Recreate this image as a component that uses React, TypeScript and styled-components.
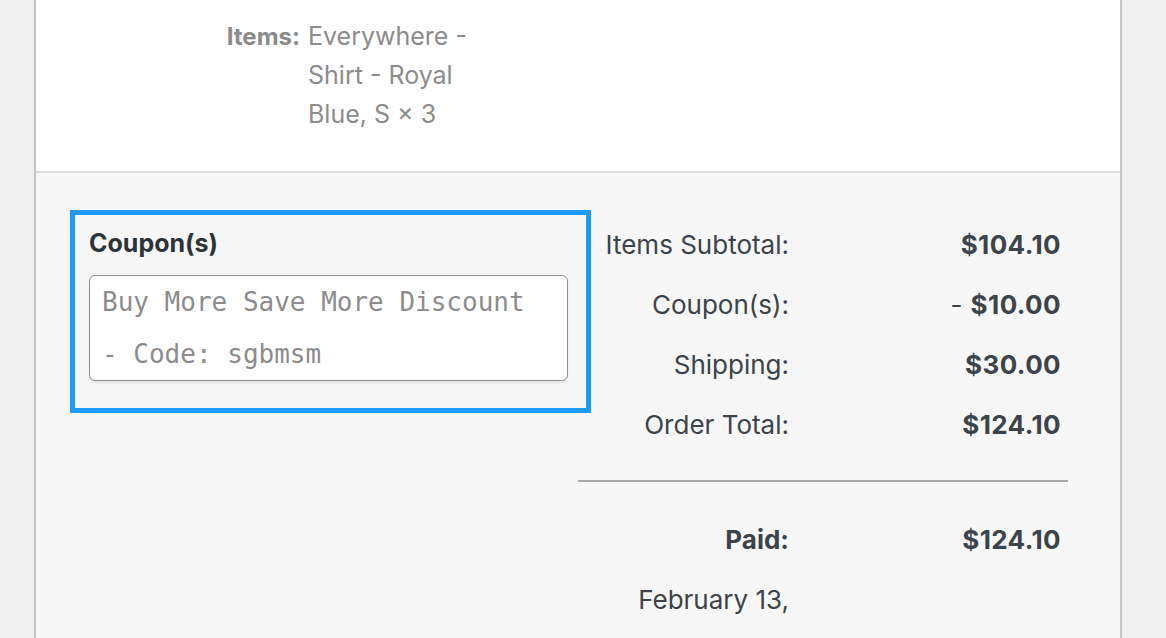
import React from "react";
import styled, { createGlobalStyle } from "styled-components";

const Global = createGlobalStyle`
  html, body { margin: 0; padding: 0; background: #f0f0f1; overflow: hidden; }
  body { font-family: Inter, Roboto, "Liberation Sans", Arial, sans-serif; }
`;

const Page = styled.div`
  width: 1166px;
  height: 638px;
  display: flex;
  padding-left: 34px;
  box-sizing: border-box;
`;

const Panel = styled.div`
  width: 1088px;
  height: 638px;
  border-left: 2px solid #c3c4c7;
  border-right: 2px solid #c3c4c7;
  box-sizing: border-box;
  display: flex;
  flex-direction: column;
`;

const TopSection = styled.div`
  background: #ffffff;
  height: 173px;
  flex-shrink: 0;
  border-bottom: 2px solid #dcdcde;
  box-sizing: border-box;
  padding-top: 17px;
  padding-left: 178px;
  display: flex;
  gap: 8px;
`;

const ItemsLabel = styled.div`
  width: 86px;
  text-align: right;
  font-weight: 700;
  font-size: 24px;
  line-height: 39px;
  color: #8a8a8a;
`;

const ItemsValue = styled.div`
  width: 175px;
  font-size: 25px;
  line-height: 39px;
  color: #8c8c8c;
`;

const BottomSection = styled.div`
  flex: 1;
  background: #f7f7f7;
  display: flex;
  padding-top: 37px;
  padding-left: 34px;
`;

const CouponBox = styled.div`
  width: 521px;
  height: 203px;
  box-sizing: border-box;
  border: 5px solid #1d9bfd;
  padding: 12px 18px 0 14px;
  flex-shrink: 0;
`;

const CouponTitle = styled.div`
  font-weight: 700;
  font-size: 25px;
  line-height: 32px;
  color: #2c3338;
  margin-bottom: 16px;
`;

const CouponField = styled.div`
  width: 479px;
  height: 106px;
  box-sizing: border-box;
  background: #ffffff;
  border: 1px solid #8c8f94;
  border-radius: 6px;
  box-shadow: 0 2px 2px rgba(0, 0, 0, 0.08);
  padding: 0 12px;
  font-family: "DejaVu Sans Mono", "Liberation Mono", monospace;
  font-size: 26px;
  line-height: 52px;
  color: #8c8c8c;
  white-space: pre-line;
`;

const Totals = styled.div`
  margin-left: -13px;
  width: 490px;
  display: flex;
  flex-direction: column;
  padding-top: 4px;
`;

const Row = styled.div`
  display: grid;
  grid-template-columns: 211px 272px;
  height: 60px;
  align-items: center;
  font-size: 26px;
  color: #3c434a;
`;

const Label = styled.div<{ $bold?: boolean }>`
  text-align: right;
  font-weight: ${(p) => (p.$bold ? 700 : 400)};
`;

const Value = styled.div`
  text-align: right;
  font-weight: 700;
  letter-spacing: 0.4px;
`;

const Minus = styled.span`
  font-weight: 400;
`;

const Rule = styled.div`
  height: 2px;
  background: #a7aaad;
  margin: 26px 0 27px;
`;

export default function App() {
  return (
    <>
      <Global />
      <Page>
        <Panel>
          <TopSection>
            <ItemsLabel>Items:</ItemsLabel>
            <ItemsValue>Everywhere - Shirt - Royal Blue, S × 3</ItemsValue>
          </TopSection>
          <BottomSection>
            <CouponBox>
              <CouponTitle>Coupon(s)</CouponTitle>
              <CouponField>{"Buy More Save More Discount\n- Code: sgbmsm"}</CouponField>
            </CouponBox>
            <Totals>
              <Row>
                <Label>Items Subtotal:</Label>
                <Value>$104.10</Value>
              </Row>
              <Row>
                <Label>Coupon(s):</Label>
                <Value>
                  <Minus>- </Minus>$10.00
                </Value>
              </Row>
              <Row>
                <Label>Shipping:</Label>
                <Value>$30.00</Value>
              </Row>
              <Row>
                <Label>Order Total:</Label>
                <Value>$124.10</Value>
              </Row>
              <Rule />
              <Row>
                <Label $bold>Paid:</Label>
                <Value>$124.10</Value>
              </Row>
              <Row>
                <Label>February 13,</Label>
                <Value />
              </Row>
            </Totals>
          </BottomSection>
        </Panel>
      </Page>
    </>
  );
}
